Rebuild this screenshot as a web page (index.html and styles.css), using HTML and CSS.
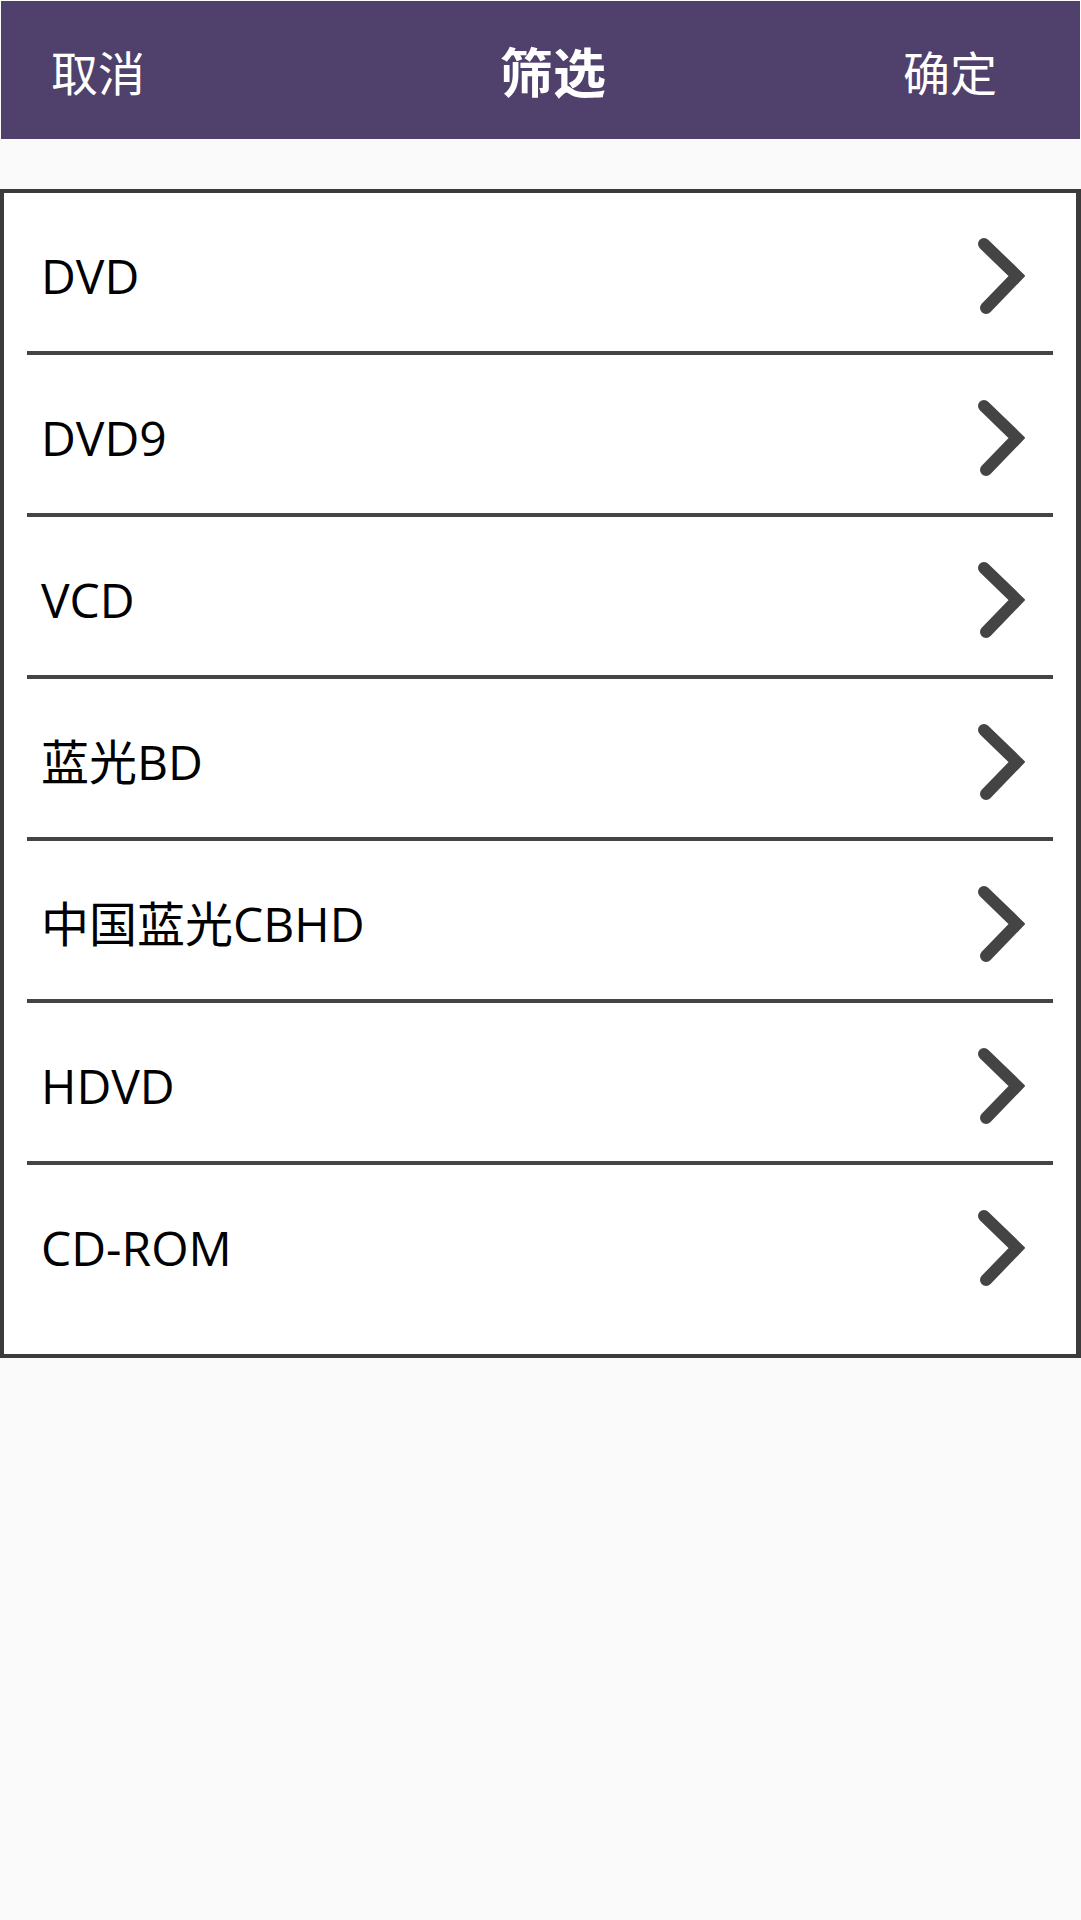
FILE: index.html
```html
<!DOCTYPE html>
<html lang="zh-CN">
<head>
<meta charset="utf-8">
<title>筛选</title>
<link rel="stylesheet" href="styles.css">
</head>
<body>
<header class="topbar">
  <span class="btn btn-cancel">取消</span>
  <span class="title">筛选</span>
  <span class="btn btn-ok">确定</span>
</header>
<ul class="list">
  <li class="item"><span class="label">DVD</span><svg class="chev" viewBox="0 0 50 80"><path d="M9 8 L42 40 L11 72"/></svg></li>
  <li class="item"><span class="label">DVD9</span><svg class="chev" viewBox="0 0 50 80"><path d="M9 8 L42 40 L11 72"/></svg></li>
  <li class="item"><span class="label">VCD</span><svg class="chev" viewBox="0 0 50 80"><path d="M9 8 L42 40 L11 72"/></svg></li>
  <li class="item"><span class="label">蓝光BD</span><svg class="chev" viewBox="0 0 50 80"><path d="M9 8 L42 40 L11 72"/></svg></li>
  <li class="item"><span class="label">中国蓝光CBHD</span><svg class="chev" viewBox="0 0 50 80"><path d="M9 8 L42 40 L11 72"/></svg></li>
  <li class="item"><span class="label">HDVD</span><svg class="chev" viewBox="0 0 50 80"><path d="M9 8 L42 40 L11 72"/></svg></li>
  <li class="item"><span class="label">CD-ROM</span><svg class="chev" viewBox="0 0 50 80"><path d="M9 8 L42 40 L11 72"/></svg></li>
</ul>
</body>
</html>
```
FILE: styles.css
```css
html, body {
  margin: 0;
  padding: 0;
  background: #fafafa;
}
body {
  font-family: "Open Sans", "Noto Sans CJK SC", sans-serif;
  color: #000;
}
.topbar {
  margin: 1px 1px 0 1px;
  height: 138px;
  background: #4f416b;
  display: grid;
  grid-template-columns: 449px auto 1fr;
  align-items: center;
  padding: 0 83px 0 50px;
  color: #fff;
  font-family: "Noto Sans CJK SC", sans-serif;
}
.btn {
  font-size: 47px;
  line-height: 1;
}
.btn-ok {
  justify-self: end;
}
.title {
  font-size: 53px;
  font-weight: 700;
  line-height: 1;
}
.list {
  list-style: none;
  margin: 50px 0 0 0;
  padding: 0 0 31px 0;
  background: #fff;
  border: 4px solid #3b3b3b;
  border-right-width: 5px;
}
.item {
  margin: 0 23px;
  border-bottom: 4px solid #444;
  display: flex;
  align-items: center;
  justify-content: space-between;
  padding: 8px 28px 0 14px;
  height: 150px;
}
.item:last-child {
  border-bottom: none;
}
.label {
  font-size: 48px;
  line-height: 1;
}
.chev {
  width: 50px;
  height: 80px;
  fill: none;
  stroke: #444;
  stroke-width: 12;
  stroke-linecap: round;
  stroke-linejoin: miter;
}
```
